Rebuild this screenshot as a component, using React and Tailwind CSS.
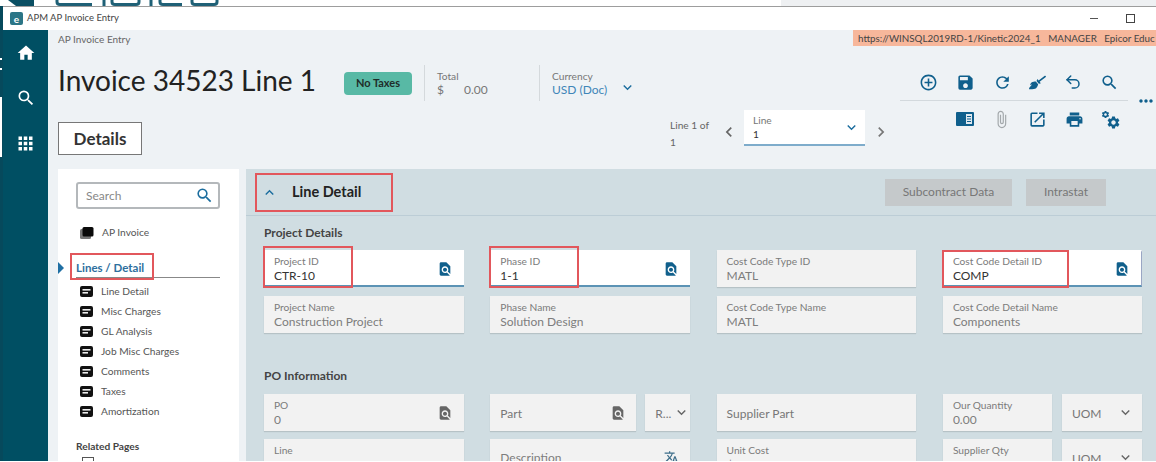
import {
  MdHome, MdSearch, MdApps, MdAddCircleOutline, MdSave, MdRefresh, MdAttachFile,
  MdOpenInNew, MdPrint, MdTranslate, MdExpandMore, MdExpandLess, MdChevronLeft, MdChevronRight,
  MdFindInPage, MdSettings, MdMoreHoriz,
} from "react-icons/md";
import { FaBroom } from "react-icons/fa";
import { Undo2 } from "lucide-react";

const NAV_ITEMS = ["Line Detail", "Misc Charges", "GL Analysis", "Job Misc Charges", "Comments", "Taxes", "Amortization"];

function LineIcon() {
  return (
    <svg width="13" height="11" viewBox="0 0 13 11" className="shrink-0">
      <rect width="13" height="11" rx="2" fill="#111" />
      <rect x="2.5" y="3" width="8" height="1.6" fill="#eee" />
      <rect x="2.5" y="6" width="5.5" height="1.6" fill="#eee" />
    </svg>
  );
}

function CardsIcon() {
  return (
    <svg width="14" height="12" viewBox="0 0 14 12" className="shrink-0">
      <rect x="0" y="2" width="11" height="10" rx="1.5" fill="#777" />
      <rect x="2.5" y="0" width="11" height="9.5" rx="1.5" fill="#0a0a0a" />
    </svg>
  );
}

function PanelIcon() {
  return (
    <svg width="18" height="14" viewBox="0 0 18 14">
      <rect width="18" height="14" rx="1" fill="#0f5f8c" />
      <rect x="10" y="2" width="6" height="10" fill="#dfe8ee" />
      <rect x="11" y="4" width="4" height="1" fill="#0f5f8c" />
      <rect x="11" y="6.5" width="4" height="1" fill="#0f5f8c" />
      <rect x="11" y="9" width="4" height="1" fill="#0f5f8c" />
    </svg>
  );
}

function GearsIcon() {
  return (
    <span className="relative block h-[18px] w-[18px]">
      <MdSettings className="absolute right-[-2px] bottom-[-2px] text-[15px] text-[#0f5f8c]" />
      <MdSettings className="absolute left-0 top-0 text-[9px] text-[#0f5f8c]" />
    </span>
  );
}

// bottoms of the big logo that sits behind the window
function LogoSliver() {
  return (
    <svg width="240" height="6" viewBox="0 0 240 6" className="shrink-0">
      <polygon points="8,0 34,0 34,6 16,6" fill="#0b4f63" />
      <g fill="none" stroke="#1f6076" strokeWidth="3">
        <path d="M57 -6 V2 Q57 4.5 60 4.5 H92" />
        <path d="M104 -6 V6" />
        <path d="M112 -6 V2 Q112 4.5 115 4.5 H136 Q139 4.5 139 2 V-6" />
        <path d="M151 -6 V6" />
        <path d="M160 -6 V2 Q160 4.5 163 4.5 H182" />
        <path d="M192 -6 V2 Q192 4.5 195 4.5 H214 Q217 4.5 217 2 V-6" />
      </g>
    </svg>
  );
}

function Field({ label, value, active, muted, icon, select, className = "" }) {
  const bg = active
    ? "bg-white border-b-2 border-t-2 border-b-[#5c93b5] border-t-transparent"
    : "bg-[#f2f2f2] shadow-[0_1px_1px_rgba(0,0,0,0.12)]";
  const tone = active ? "text-[#333]" : muted ? "text-[#7d7d7d]" : "text-[#777]";
  return (
    <div className={`flex h-[37px] items-center justify-between pl-[10px] pr-[11px] ${bg} ${className}`}>
      <div className="min-w-0 whitespace-nowrap">
        {label && <div className="text-[10.2px] leading-[14px] text-[#7b7b7b]">{label}</div>}
        {value && <div className={`text-[12px] leading-[15px] ${tone}`}>{value}</div>}
      </div>
      {icon === "active" && <MdFindInPage className="shrink-0 text-[16px] text-[#11608c]" />}
      {icon === "muted" && <MdFindInPage className="shrink-0 text-[16px] text-[#666]" />}
      {icon === "translate" && <MdTranslate className="shrink-0 text-[15px] text-[#3d6e8a]" />}
      {select && <MdExpandMore className="shrink-0 text-[17px] text-[#666]" />}
    </div>
  );
}

function PlainField({ text, icon, select, className = "" }) {
  return (
    <div className={`flex h-[37px] min-w-0 items-center justify-between bg-[#f2f2f2] pl-[10px] shadow-[0_1px_1px_rgba(0,0,0,0.12)] ${className}`}>
      <span className="whitespace-nowrap pt-[2px] text-[12px] text-[#777]">{text}</span>
      {icon && <MdFindInPage className="shrink-0 text-[16px] text-[#666]" />}
      {select && <MdExpandMore className="shrink-0 text-[17px] text-[#666]" />}
    </div>
  );
}

function RedBox({ className }) {
  return <span className={`pointer-events-none absolute border-2 border-[#e2575c] ${className}`} />;
}

export default function App() {
  return (
    <div
      className="relative h-[462px] w-[1156px] overflow-hidden bg-[#06495c]"
      style={{ fontFamily: '"Lato", "Noto Sans", sans-serif' }}
    >
      {/* sliver of the desktop behind the window */}
      <div className="flex h-[6px] bg-white">
        <LogoSliver />
        <div className="flex-1" />
        <div className="w-[375px] bg-[#eef0f2]" />
      </div>

      {/* bit of the window behind, showing at the left edge */}
      <span className="absolute left-0 top-[97px] h-[60px] w-[2px] bg-white" />
      <span className="absolute left-0 top-[58px] h-[2px] w-[2px] bg-white" />
      <span className="absolute left-0 top-[68px] h-[2px] w-[2px] bg-white" />

      <div className="ml-[3px] border-t border-[#9d9d9d] bg-[#eef2f5]">
        {/* title bar */}
        <div className="flex h-[23px] items-center bg-white pl-[7px]">
          <span className="flex h-[13px] w-[13px] items-center justify-center rounded-[2px] bg-[#2b7586] text-[10px] font-bold leading-none text-white">e</span>
          <span className="ml-[4px] text-[9.5px] text-[#444]">APM AP Invoice Entry</span>
          <span className="ml-auto mr-[28px] h-[1px] w-[8px] bg-[#555]" />
          <span className="mr-[21px] h-[9px] w-[9px] border border-[#444]" />
        </div>

        <div className="flex h-[432px]">
          {/* app rail */}
          <div className="flex w-[45px] shrink-0 flex-col items-center bg-[#004f63] pt-[13px] text-white">
            <MdHome className="text-[20px]" />
            <MdSearch className="mt-[25px] text-[20px]" />
            <MdApps className="mt-[25px] text-[21px]" />
          </div>

          <div className="flex min-w-0 flex-1 flex-col">
            {/* breadcrumb + environment */}
            <div className="flex h-[16px] items-start justify-between">
              <span className="pl-[10px] pt-[2px] text-[10px] text-[#666]">AP Invoice Entry</span>
              <span className="h-[16px] w-[303px] whitespace-nowrap bg-[#f7b79b] pl-[5px] text-[9.8px] leading-[16px] text-[#444]">
                https://WINSQL2019RD-1/Kinetic2024_1&nbsp;&nbsp; MANAGER&nbsp;&nbsp; Epicor Educ
              </span>
            </div>

            {/* page header */}
            <div className="flex h-[123px] shrink-0">
              <div className="w-[612px] shrink-0 pl-[10px]">
                <div className="flex h-[60px] items-center pt-[14px]">
                  <h1 className="mb-[6px] w-[286px] whitespace-nowrap text-[28px] leading-none text-[#222]">Invoice 34523 Line 1</h1>
                  <span className="flex h-[23px] w-[68px] items-center justify-center rounded-[4px] bg-[#58b9a5] text-[11px] font-bold text-[#1f2d2a]">No Taxes</span>
                  <div className="ml-[12px] h-[36px] w-px bg-[#d4d9dc]" />
                  <div className="ml-[12px] w-[102px] text-[10.2px] leading-[14px] text-[#777]">
                    <div>Total</div>
                    <div className="flex gap-[20px] text-[12px]"><span>$</span><span>0.00</span></div>
                  </div>
                  <div className="h-[36px] w-px bg-[#d4d9dc]" />
                  <div className="ml-[12px] text-[10.2px] leading-[14px] text-[#777]">
                    <div>Currency</div>
                    <div className="text-[12px] text-[#3f86b8]">USD (Doc)</div>
                  </div>
                  <MdExpandMore className="ml-[12px] mt-[8px] text-[17px] text-[#1b6d9e]" />
                </div>
                <div className="mt-[16px] flex h-[33px] w-[84px] items-center justify-center border-[1.5px] border-[#777] bg-white text-[17px] font-bold text-[#333]">
                  Details
                </div>
              </div>

              <div className="flex flex-1 items-start">
                <div className="mt-[71px] w-[59px] pl-[10px] pr-[6px] text-[10.2px] leading-[17px] text-[#666]">Line 1 of 1</div>
                <MdChevronLeft className="mt-[76px] text-[20px] text-[#666]" />
                <div className="ml-[5px] mt-[64px] flex h-[36px] w-[121px] items-center justify-between border-b-2 border-[#7eaccb] bg-white pl-[9px] pr-[5px]">
                  <div className="text-[10.2px] leading-[14px] text-[#777]">
                    <div>Line</div>
                    <div className="text-[#333]">1</div>
                  </div>
                  <MdExpandMore className="text-[17px] text-[#1b6d9e]" />
                </div>
                <MdChevronRight className="ml-[6px] mt-[76px] text-[20px] text-[#777]" />

                {/* toolbar */}
                <div className="ml-[9px] mt-[18px] w-[228px] text-[#0f5f8c]">
                  <div className="flex h-[37px] items-center justify-between border-b border-[#d3d9dd] pl-[19px] pr-[9px] text-[19px]">
                    <MdAddCircleOutline />
                    <MdSave />
                    <MdRefresh />
                    <FaBroom className="text-[17px]" />
                    <Undo2 size={18} strokeWidth={2} />
                    <MdSearch />
                  </div>
                  <div className="flex h-[36px] items-center justify-between pl-[56px] pr-[9px] text-[19px]">
                    <PanelIcon />
                    <MdAttachFile className="text-[#a3a8ab]" />
                    <MdOpenInNew />
                    <MdPrint />
                    <GearsIcon />
                  </div>
                </div>
                <MdMoreHoriz className="ml-[8px] mt-[45px] text-[20px] text-[#0f5f8c]" />
              </div>
            </div>

            {/* content */}
            <div className="flex min-h-0 flex-1">
              <div className="w-[10px] shrink-0" />
              <aside className="relative w-[181px] shrink-0 overflow-hidden bg-white pl-[18px] pr-[19px] pt-[13px]">
                <div className="flex h-[27px] items-center justify-between rounded-[3px] border-2 border-[#b4b8bb] pl-[8px] pr-[4px]">
                  <span className="text-[12px] text-[#888]">Search</span>
                  <MdSearch className="text-[19px] text-[#1b6d9e]" />
                </div>
                <div className="mt-[16px] flex items-center gap-[8px] pl-[4px] text-[10.2px] text-[#555]">
                  <CardsIcon />
                  AP Invoice
                </div>
                <div className="mt-[20px] border-b border-[#888] pb-[1px] text-[11.5px] font-bold leading-[16px] text-[#2e6f9e]">Lines / Detail</div>
                <span className="absolute left-0 top-[93px] h-0 w-0 border-y-[6px] border-l-[6px] border-y-transparent border-l-[#1f6fa3]" />
                <RedBox className="left-[12px] top-[84px] h-[27px] w-[84px]" />
                <ul className="mt-[3px]">
                  {NAV_ITEMS.map((item) => (
                    <li key={item} className="flex h-[20px] items-center gap-[8px] pl-[4px] text-[10.2px] text-[#555]">
                      <LineIcon />
                      {item}
                    </li>
                  ))}
                </ul>
                <div className="mt-[18px] text-[10.2px] font-bold text-[#444]">Related Pages</div>
                <div className="mt-[2px] ml-[6px] h-[6px] w-[12px] border border-[#555]" />
              </aside>

              <div className="w-[7px] shrink-0" />

              <section className="relative min-w-0 flex-1 bg-[#d0dde2]">
                <div className="flex h-[47px] items-center justify-between border-b border-[#bccdd6] pl-[15px] pr-[50px]">
                  <div className="flex items-center gap-[14px]">
                    <MdExpandLess className="text-[17px] text-[#1b6d9e]" />
                    <span className="text-[14.5px] font-bold text-[#222]">Line Detail</span>
                  </div>
                  <div className="flex gap-[14px] text-[12px] text-[#777]">
                    <span className="flex h-[27px] w-[127px] items-center justify-center bg-[#c5c9cb]">Subcontract Data</span>
                    <span className="flex h-[27px] w-[80px] items-center justify-center bg-[#c5c9cb]">Intrastat</span>
                  </div>
                </div>
                <RedBox className="left-[9px] top-[4px] h-[39px] w-[138px]" />

                <div className="pl-[18px]">
                  <h3 className="mt-[9px] h-[25px] text-[12px] font-bold leading-[16px] text-[#444]">Project Details</h3>
                  <div className="grid grid-cols-[199.5px_199.5px_199.5px_199.5px] gap-x-[26.8px] gap-y-[9px]">
                    <Field label="Project ID" value="CTR-10" active icon="active" />
                    <Field label="Phase ID" value="1-1" active icon="active" />
                    <Field label="Cost Code Type ID" value="MATL" muted />
                    <Field label="Cost Code Detail ID" value="COMP" active icon="active" className="border-r border-r-[#9aa6c4]" />
                    <Field label="Project Name" value="Construction Project" muted />
                    <Field label="Phase Name" value="Solution Design" muted />
                    <Field label="Cost Code Type Name" value="MATL" muted />
                    <Field label="Cost Code Detail Name" value="Components" muted />
                  </div>

                  <h3 className="mt-[35px] h-[26px] text-[12px] font-bold leading-[16px] text-[#444]">PO Information</h3>
                  <div className="grid grid-cols-[199.5px_199.5px_199.5px_199.5px] gap-x-[26.8px] gap-y-[8px]">
                    <Field label="PO" value="0" muted icon="muted" />
                    <div className="flex gap-[9px]">
                      <PlainField text="Part" icon className="w-[146px] shrink-0 pr-[10px]" />
                      <PlainField text="R..." select className="flex-1" />
                    </div>
                    <PlainField text="Supplier Part" />
                    <div className="flex gap-[10px]">
                      <Field label="Our Quantity" value="0.00" muted className="w-[109px] shrink-0" />
                      <PlainField text="UOM" select className="flex-1 pr-[8px]" />
                    </div>
                    <Field label="Line" value="1" muted />
                    <Field value="Description" muted icon="translate" />
                    <Field label="Unit Cost" value="$" muted />
                    <div className="flex gap-[10px]">
                      <Field label="Supplier Qty" value="0.00" muted className="w-[109px] shrink-0" />
                      <PlainField text="UOM" select className="flex-1 pr-[8px]" />
                    </div>
                  </div>
                </div>

                <RedBox className="left-[17px] top-[77px] h-[42px] w-[90px]" />
                <RedBox className="left-[243px] top-[77px] h-[42px] w-[90px]" />
                <RedBox className="left-[696px] top-[81px] h-[38px] w-[127px]" />
              </section>
            </div>
          </div>
        </div>
      </div>

      {/* bottom edge of the capture */}
      <div className="absolute inset-x-0 bottom-0 h-[1px] bg-white" />
    </div>
  );
}
